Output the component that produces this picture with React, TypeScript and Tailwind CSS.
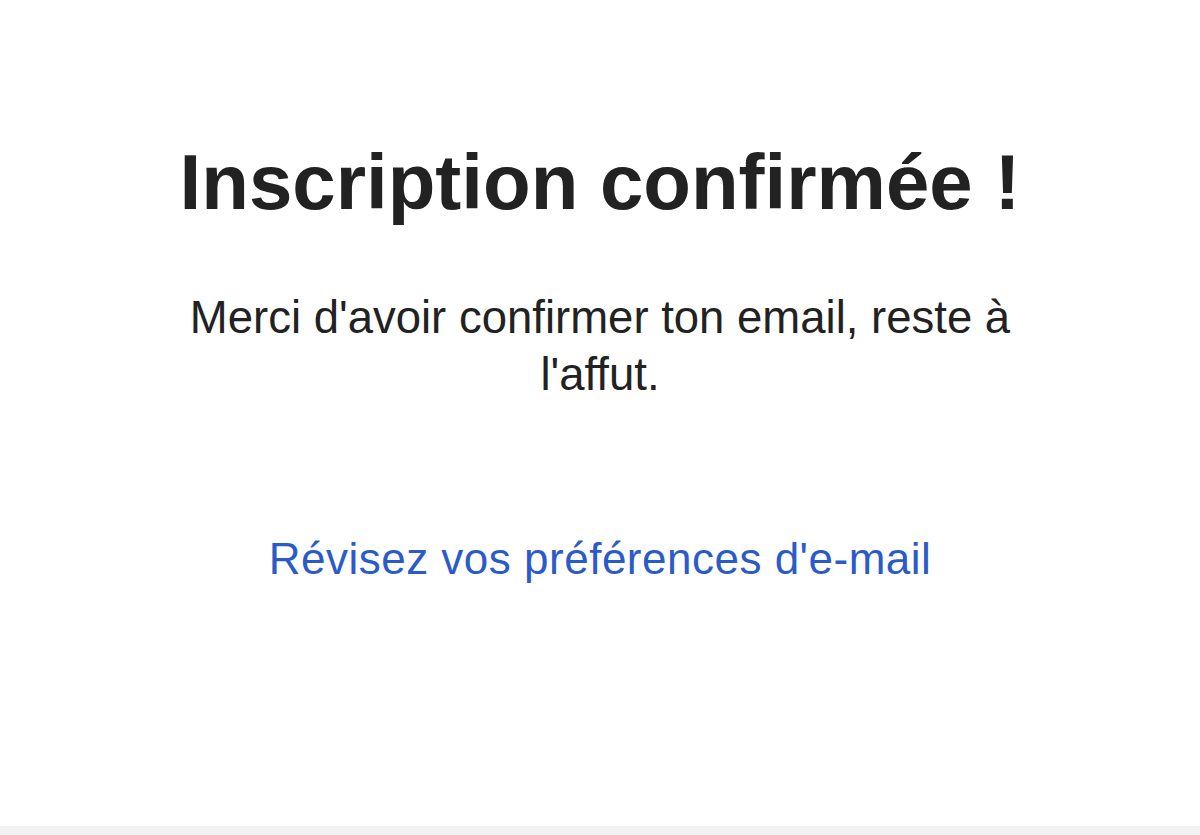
import React from "react";

export default function App() {
  return (
    <div className="w-[1200px] h-[835px] bg-white flex flex-col font-['Liberation_Sans',Arial,sans-serif] text-[#222222]">
      <div className="flex-1 flex flex-col items-center">
        <h1 className="mt-[134px] text-[78px] leading-[96px] font-bold text-center">Inscription confirmée !</h1>
        <p className="mt-[59px] w-[880px] text-center text-[45.5px] leading-[57px]">
          Merci d'avoir confirmer ton email, reste à l'affut.
        </p>
        <a href="#" className="mt-[131px] text-[44px] leading-[50px] tracking-[0.5px] text-[#2b5bc9]">
          Révisez vos préférences d'e-mail
        </a>
      </div>
      <div className="h-[9px] bg-[#f2f2f2]" />
    </div>
  );
}
